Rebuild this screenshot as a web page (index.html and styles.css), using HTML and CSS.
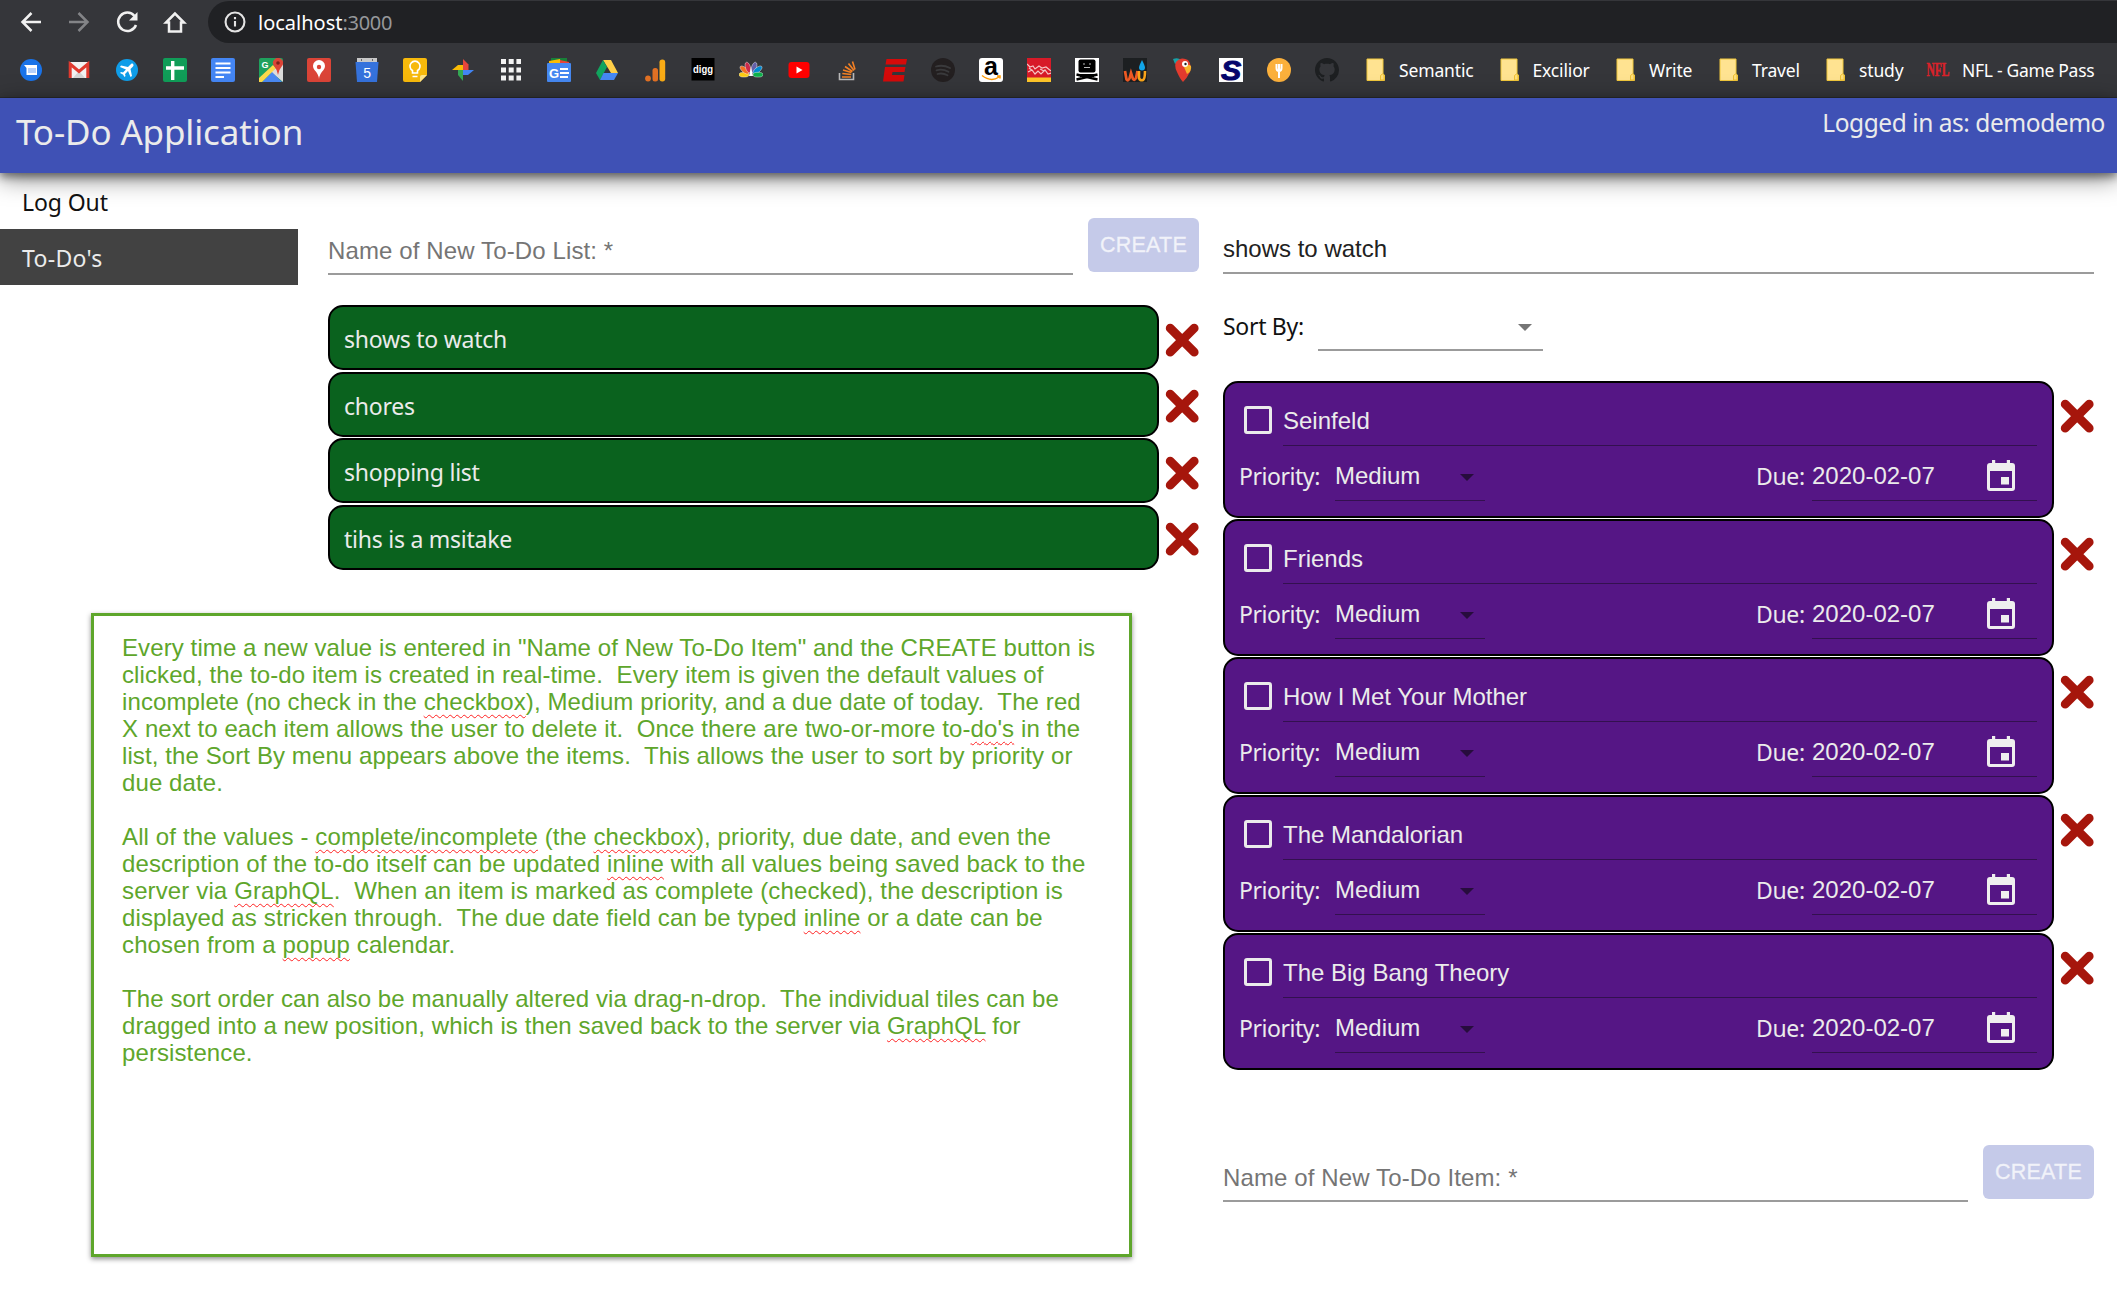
FILE: index.html
```html
<!DOCTYPE html>
<html lang="en">
<head>
<meta charset="utf-8">
<title>To-Do Application</title>
<link rel="stylesheet" href="styles.css">
</head>
<body>
<svg class="defs" width="0" height="0" aria-hidden="true">
  <symbol id="folder" viewBox="0 0 24 24"><path d="M4 1h16v15l1.500 1v5.500H4z" fill="#ffe391" stroke="#f0c73c"/><path d="M17.500 22v-4.500q2-3 3.500 0V22z" fill="#ffdf7c" stroke="#eebf30"/></symbol>
  <symbol id="cross" viewBox="0 0 34 34"><path d="M5.200 5.200l24 24M29.200 5.200l-24 24" stroke="#a6160c" stroke-width="8.800" stroke-linecap="round" fill="none"/></symbol>
  <symbol id="calendar" viewBox="0 0 28 31"><path fill="#efefef" d="M5 0h3.200v3h11.600V0H23v3h2a3 3 0 0 1 3 3v22a3 3 0 0 1-3 3H3a3 3 0 0 1-3-3V6a3 3 0 0 1 3-3h2zM3 11v17h22V11zM14 17h8v7.500h-8z" fill-rule="evenodd"/></symbol>
</svg>

<div class="browser">
  <div class="toolbar">
    <svg class="nav" viewBox="0 0 24 24"><path d="M22 12H4M12.500 3L3.500 12l9 9" /></svg>
    <svg class="nav off" viewBox="0 0 24 24"><path d="M2 12h18M11.500 3l9 9-9 9" /></svg>
    <svg class="nav" viewBox="0 0 24 24"><path d="M19.500 6A9.200 9.200 0 1 0 21 15"/><path d="M22.500 2v8.500H14z" fill="#f1f1f1" stroke="none"/></svg>
    <svg class="nav" viewBox="0 0 24 24"><path d="M12 3.500L3 12.500h3V21.500h12V12.500h3z"/></svg>
    <div class="address">
      <svg class="info" viewBox="0 0 24 24"><circle cx="12" cy="12" r="10.300"/><path d="M12 11v6M12 6.500v2.500"/></svg>
      <span class="host">localhost</span><span class="port">:3000</span>
    </div>
  </div>
  <div class="bookmarks">
    <div class="icons">
    <svg viewBox="0 0 24 24"><circle cx="12" cy="12" r="11" fill="#1a73e8"/><path d="M5 7h13v10H7.500V10z" fill="#fff"/><path d="M9 10h8v5H9z" fill="#b5d0fb"/></svg>
    <svg viewBox="0 0 24 24"><path d="M2 4h20v16H2z" fill="#f2f2f2"/><path d="M6 20l6-7 6 7z" fill="#d5d5d5"/><path d="M3.200 20V6L12 13.500 20.800 6v14" fill="none" stroke="#e03a2f" stroke-width="3"/></svg>
    <svg viewBox="0 0 24 24"><circle cx="12" cy="12" r="11" fill="#0f9de8"/><path d="M18 6c-1-1-2 0-3 1l-2 2-7-1.500L5 9l6 2.500-3 3-2-.5-1 1 3 1.500L9.500 19l1-1-.5-2 3-3 2.500 6 1.500-1-1.500-7 2-2c1-1 1.500-2 .5-3z" fill="#fff"/></svg>
    <svg viewBox="0 0 24 24"><rect width="24" height="24" rx="2" fill="#109d58"/><path d="M9.700 3v19M3 10h18" stroke="#fff" stroke-width="3.400"/></svg>
    <svg viewBox="0 0 24 24"><rect width="24" height="24" rx="2" fill="#4486f4"/><path d="M4.500 5.500h15M4.500 10h15M4.500 14.500h15M4.500 19h8.500" stroke="#fff" stroke-width="2.200"/></svg>
    <svg viewBox="0 0 24 24"><rect width="24" height="24" rx="2" fill="#1fa15d"/><path d="M12 14L24 24V4z" fill="#dcdcdc"/><path d="M3 24l10-10 10 10z" fill="#4a89f3"/><path d="M0 24v-4L14 7l3 3L3 24z" fill="#fdd94a"/><text x="2.500" y="9.500" class="g-mark">G</text><path d="M19 17q-.5-5-4-9a5 5 0 1 1 8 0q-3.500 4-4 9z" fill="#dc4437"/><circle cx="19" cy="5" r="1.800" fill="#7c201b"/></svg>
    <svg viewBox="0 0 24 24"><rect width="24" height="24" rx="2" fill="#db4437"/><path d="M12 21q-.5-5-4.500-9a6 6 0 1 1 9 0q-4 4-4.500 9z" fill="#fff"/><circle cx="12" cy="9" r="2.200" fill="#db4437"/></svg>
    <svg viewBox="0 0 24 24"><path d="M2 0h20v5H2z" fill="#c8c8c8"/><path d="M.5 4h23L22 24H2z" fill="#3572dc"/><path d="M6 2h1M17 2h1" stroke="#666" stroke-width="2"/><text x="12" y="19.500" class="cal-mark">5</text></svg>
    <svg viewBox="0 0 24 24"><path d="M2 0h20a2 2 0 0 1 2 2v15l-7 7H2a2 2 0 0 1-2-2V2a2 2 0 0 1 2-2z" fill="#f7b90b"/><path d="M17 24v-5q0-2 2-2h5z" fill="#ffe58c"/><path d="M9.500 15v-2.500a5 5 0 1 1 5 0V15zM9.500 18.500h5" stroke="#fff" stroke-width="1.600" fill="none"/></svg>
    <svg viewBox="0 0 24 24"><path d="M12 12V1l5.500 5.500V12z" fill="#e8453c"/><path d="M12 12h11l-6 5h-5z" fill="#4285f4"/><path d="M12 12v11l-5-6v-5z" fill="#34a853"/><path d="M12 12H1l6-5h5z" fill="#fbbc05"/></svg>
    <svg viewBox="0 0 24 24"><path d="M2 3.500h20M2 12h20M2 20h20" stroke="#f3f3f3" stroke-width="5" stroke-dasharray="5 2.700"/></svg>
    <svg viewBox="0 0 24 24"><path d="M4 0h16v6H4z" fill="#188038"/><path d="M2 3l11-2 1 5H2z" fill="#fbbc04"/><path d="M13 2l9 2v4h-9z" fill="#ea4335"/><rect y="5" width="24" height="19" rx="1" fill="#4688f1"/><text x="2" y="19.500" class="news-mark">G</text><path d="M13 11h8M13 15h9M13 19h8" stroke="#fff" stroke-width="1.900"/></svg>
    <svg viewBox="0 0 24 24"><path d="M8 2h8l7 13h-7z" fill="#ffcf48"/><path d="M8 2l4 7-7 13-4-7z" fill="#11a45e"/><path d="M8.500 15H23l-4 7H5z" fill="#4688f4"/></svg>
    <svg viewBox="0 0 24 24"><circle cx="5" cy="20.500" r="2.900" fill="#e27124"/><rect x="9.500" y="10" width="5.500" height="13.500" rx="2.500" fill="#e27124"/><rect x="16.500" y="1.500" width="5.700" height="22" rx="2.700" fill="#f9ab15"/></svg>
    <svg viewBox="0 0 24 24"><rect x=".5" width="23" height="22.500"/><text x="2" y="14.500" class="digg-mark" textLength="20" lengthAdjust="spacingAndGlyphs">digg</text></svg>
    <svg viewBox="0 0 24 24"><g stroke="#fff" stroke-width=".4"><ellipse cx="5" cy="16.700" rx="5" ry="2.400" fill="#fccc12"/><ellipse cx="5.500" cy="12" rx="2.500" ry="5.500" transform="rotate(-50 5.500 12)" fill="#f37021"/><ellipse cx="9" cy="9.500" rx="2.500" ry="5.500" transform="rotate(-18 9 9.500)" fill="#cc2a49"/><ellipse cx="15" cy="9.500" rx="2.500" ry="5.500" transform="rotate(18 15 9.500)" fill="#6460aa"/><ellipse cx="18.500" cy="12" rx="2.500" ry="5.500" transform="rotate(50 18.500 12)" fill="#0089d0"/><ellipse cx="19" cy="16.700" rx="5" ry="2.400" fill="#0db14b"/></g><path d="M12 9l2 9h-4z" fill="#fff"/></svg>
    <svg viewBox="0 0 24 24"><rect x="1.500" y="4" width="21" height="16" rx="3" fill="#f00"/><path d="M9.500 8.500v7l6-3.500z" fill="#fff"/></svg>
    <svg viewBox="0 0 24 24"><path d="M4.500 15v6.500h14V15" stroke="#b9b9b9" stroke-width="1.600" fill="none"/><path d="M7 19h9M7.300 15.500l9 1M8 12l8.500 2.500M10 8.500l7.500 5M13.500 5.500l5.500 7M17.500 3.500l2.500 8" stroke="#f38024" stroke-width="1.600"/></svg>
    <svg viewBox="0 0 24 24"><path d="M3.500 1H24l-1 5.500H2.500zM2 9h20.500l-1 5H9.500L9 17h12.500l-1 6.500H0z" fill="#d50a0a"/></svg>
    <svg viewBox="0 0 24 24"><circle cx="12" cy="12" r="12" fill="#231f20"/><path d="M5 8.500q7-2 14 1.500M5.500 12.300q6-1.800 12 1.500M6.500 16q5-1.500 10 1.300" stroke="#3a3a3c" stroke-width="1.800" fill="none" stroke-linecap="round"/></svg>
    <svg viewBox="0 0 24 24"><rect width="24" height="24" rx="3" fill="#fff"/><text x="12" y="16.500" class="a-mark">a</text><path d="M3 17.500q9 7 17 1.500M18 18h3v2.500" stroke="#f90" stroke-width="1.500" fill="none"/></svg>
    <svg viewBox="0 0 24 24"><path d="M0 0h24v24H0z" fill="#d71a28"/><path d="M0 19.500h24V24H0z" fill="#ffc629"/><path d="M0 6l3 3 3-1 2 3 4-3 3 2 4-1 5 4M1 14l4-2 3 4 3-3 3 3 4-4 3 4 3-1M2 10l4 3M13 11l4 2" stroke="#f6c6c6" stroke-width="1.200" fill="none"/></svg>
    <svg viewBox="0 0 24 24"><path d="M0 0h24v24H0z" fill="#fff"/><rect x="3.500" y="1.500" width="17" height="13" rx="2"/><path d="M8 6h2M14 6h2M9 9.500h6" stroke="#bbb" stroke-width="1.200"/><path d="M1.500 16.500l21 5M22.500 16.500l-21 5" stroke="#000" stroke-width="2.400"/><path d="M5 17.500h14" stroke="#000" stroke-width="3"/></svg>
    <svg viewBox="0 0 24 24"><path d="M0 0h24v24H0z" fill="#1c1f21"/><path d="M2 13l1.500 8.500q1.500 2 3-1L8 15l2 6q1.500 2 3-1l1.500-7" stroke="#ee5a24" stroke-width="2.700" fill="none"/><path d="M16 13v7q1 3 4 2 2-1 2-9" stroke="#f9a41a" stroke-width="2.600" fill="none"/><path d="M19 2q-3 6-3 7.500a3 3 0 0 0 6 0Q22 8 19 2z" fill="#12a5e8"/></svg>
    <svg viewBox="0 0 24 24"><path d="M2 1q5-2 8 1L4 6z" fill="#17a2a8"/><path d="M5 4q5-6 12-2 4 4 2 12-3 6-7 10-3-3-6-10-3-6-1-10z" fill="#e33b2e"/><path d="M13 9q4-4 7-1 1 5-4 8z" fill="#f7b32b"/><circle cx="14" cy="6" r="3" fill="#fff"/><circle cx="14.500" cy="6" r="1.200" fill="#222"/></svg>
    <svg viewBox="0 0 24 24"><path d="M0 0h24v24H0z" fill="#fff"/><text x="12" y="22" class="s-mark" textLength="20" lengthAdjust="spacingAndGlyphs">S</text></svg>
    <svg viewBox="0 0 24 24"><circle cx="12" cy="12" r="12" fill="#fbb03b"/><path d="M9.500 6v4q0 3 2.500 3t2.500-3V6M12 6v14" stroke="#fff" stroke-width="2" fill="none"/></svg>
    <svg viewBox="0 0 16 16"><path fill="#1d1f21" d="M8 0C3.580 0 0 3.580 0 8c0 3.540 2.290 6.530 5.470 7.590.4.070.55-.17.55-.38 0-.19-.01-.82-.01-1.490-2.010.37-2.530-.49-2.690-.94-.09-.23-.48-.94-.82-1.130-.28-.15-.68-.52-.01-.53.63-.01 1.080.58 1.230.82.720 1.210 1.870.87 2.330.66.070-.52.280-.87.510-1.070-1.780-.2-3.640-.89-3.640-3.950 0-.87.310-1.590.82-2.150-.08-.2-.36-1.020.08-2.120 0 0 .67-.21 2.200.82.640-.18 1.320-.27 2-.27s1.360.09 2 .27c1.530-1.040 2.200-.82 2.200-.82.440 1.100.16 1.920.08 2.120.51.560.82 1.270.82 2.150 0 3.070-1.870 3.750-3.650 3.950.29.250.54.730.54 1.480 0 1.070-.01 1.930-.01 2.200 0 .21.150.46.550.38A8.010 8.010 0 0 0 16 8c0-4.420-3.580-8-8-8z"/></svg>
    </div>
    <div class="mark m1"><svg><use href="#folder"/></svg><span>Semantic</span></div>
    <div class="mark m2"><svg><use href="#folder"/></svg><span>Excilior</span></div>
    <div class="mark m3"><svg><use href="#folder"/></svg><span>Write</span></div>
    <div class="mark m4"><svg><use href="#folder"/></svg><span>Travel</span></div>
    <div class="mark m5"><svg><use href="#folder"/></svg><span>study</span></div>
    <div class="mark m6"><svg viewBox="0 0 24 24"><text x=".5" y="18" class="nfl-mark" textLength="23" lengthAdjust="spacingAndGlyphs">NFL</text></svg><span>NFL - Game Pass</span></div>
  </div>
</div>

<header class="appbar">
  <h1>To-Do Application</h1>
  <div class="user">Logged in as: demodemo</div>
</header>

<div class="layout">
  <nav class="sidebar">
    <a class="item">Log Out</a>
    <a class="item active">To-Do's</a>
  </nav>

  <section class="lists">
    <div class="newrow">
      <div class="field">Name of New To-Do List: *</div>
      <button class="create">CREATE</button>
    </div>
    <div class="rows">
      <div class="listrow"><div class="list">shows to watch</div><svg class="x"><use href="#cross"/></svg></div>
      <div class="listrow"><div class="list">chores</div><svg class="x"><use href="#cross"/></svg></div>
      <div class="listrow"><div class="list">shopping list</div><svg class="x"><use href="#cross"/></svg></div>
      <div class="listrow"><div class="list">tihs is a msitake</div><svg class="x"><use href="#cross"/></svg></div>
    </div>
  </section>

  <section class="todos">
    <div class="listname">shows to watch</div>
    <div class="sort"><span class="sortlabel">Sort By:</span><div class="select"><i class="arrow"></i></div></div>
    <div class="cards">
      <div class="cardrow"><div class="card">
        <div class="top"><i class="check"></i><div class="desc">Seinfeld</div></div>
        <div class="bottom"><span class="label">Priority:</span><div class="priority">Medium<i class="arrow"></i></div><span class="due">Due:</span><div class="date">2020-02-07<svg><use href="#calendar"/></svg></div></div>
      </div><svg class="x"><use href="#cross"/></svg></div>
      <div class="cardrow"><div class="card">
        <div class="top"><i class="check"></i><div class="desc">Friends</div></div>
        <div class="bottom"><span class="label">Priority:</span><div class="priority">Medium<i class="arrow"></i></div><span class="due">Due:</span><div class="date">2020-02-07<svg><use href="#calendar"/></svg></div></div>
      </div><svg class="x"><use href="#cross"/></svg></div>
      <div class="cardrow"><div class="card">
        <div class="top"><i class="check"></i><div class="desc">How I Met Your Mother</div></div>
        <div class="bottom"><span class="label">Priority:</span><div class="priority">Medium<i class="arrow"></i></div><span class="due">Due:</span><div class="date">2020-02-07<svg><use href="#calendar"/></svg></div></div>
      </div><svg class="x"><use href="#cross"/></svg></div>
      <div class="cardrow"><div class="card">
        <div class="top"><i class="check"></i><div class="desc">The Mandalorian</div></div>
        <div class="bottom"><span class="label">Priority:</span><div class="priority">Medium<i class="arrow"></i></div><span class="due">Due:</span><div class="date">2020-02-07<svg><use href="#calendar"/></svg></div></div>
      </div><svg class="x"><use href="#cross"/></svg></div>
      <div class="cardrow"><div class="card">
        <div class="top"><i class="check"></i><div class="desc">The Big Bang Theory</div></div>
        <div class="bottom"><span class="label">Priority:</span><div class="priority">Medium<i class="arrow"></i></div><span class="due">Due:</span><div class="date">2020-02-07<svg><use href="#calendar"/></svg></div></div>
      </div><svg class="x"><use href="#cross"/></svg></div>
    </div>
    <div class="newrow newitem">
      <div class="field">Name of New To-Do Item: *</div>
      <button class="create">CREATE</button>
    </div>
  </section>
</div>

<aside class="note">
<p>Every time a new value is entered in "Name of New To-Do Item" and the CREATE button is
clicked, the to-do item is created in real-time.  Every item is given the default values of
incomplete (no check in the <u>checkbox</u>), Medium priority, and a due date of today.  The red
X next to each item allows the user to delete it.  Once there are two-or-more to-<u>do's</u> in the
list, the Sort By menu appears above the items.  This allows the user to sort by priority or
due date.</p>
<p class="p2">All of the values - <u>complete/incomplete</u> (the <u>checkbox</u>), priority, due date, and even the
description of the to-do itself can be updated <u>inline</u> with all values being saved back to the
server via <u>GraphQL</u>.  When an item is marked as complete (checked), the description is
displayed as stricken through.  The due date field can be typed <u>inline</u> or a date can be
chosen from a <u>popup</u> calendar.</p>
<p>The sort order can also be manually altered via drag-n-drop.  The individual tiles can be
dragged into a new position, which is then saved back to the server via <u>GraphQL</u> for
persistence.</p>
</aside>
</body>
</html>
```
FILE: styles.css
```css
* { box-sizing: border-box; }
body {
  margin: 0;
  width: 2117px;
  height: 1295px;
  overflow: hidden;
  position: relative;
  background: #fff;
  color: #111;
  font: 23px/32px "Noto Sans", "Open Sans", sans-serif;
}
svg { display: block; flex: none; }
.defs { position: absolute; }

/* browser chrome */
.browser { height: 98px; background: #35363a; border-bottom: 1px solid #2a2b2e; }
.toolbar { display: flex; align-items: center; height: 43px; padding-left: 19px; }
.nav { width: 24px; height: 24px; margin-right: 24px; fill: none; stroke: #f1f1f1; stroke-width: 2.5; }
.nav.off { stroke: #838487; }
.address {
  display: flex; align-items: center; flex: 1;
  height: 42px; margin: 1px 0 0 -3px; padding-left: 15px;
  background: #202124; border-radius: 21px 0 0 21px;
  font-size: 20px; color: #fff;
}
.info { width: 22px; height: 22px; margin: 0 12px 0 1px; fill: none; stroke: #e4e4e4; stroke-width: 2.3; }
.host, .port { padding-top: 1px; }
.port { color: #96989b; letter-spacing: -.3px; }
.bookmarks { display: flex; align-items: center; height: 54px; padding-left: 19px; font-size: 17.500px; color: #fff; letter-spacing: -.15px; }
.icons { display: flex; gap: 24px; width: 1344px; }
.icons svg, .mark svg { width: 24px; height: 24px; }
.mark { display: flex; align-items: center; white-space: nowrap; }
.mark svg { margin-right: 12px; letter-spacing: 0; }
.m1 { width: 133.500px; }
.m2 { width: 116.500px; }
.m3 { width: 103px; }
.m4 { width: 107px; }
.m5 { width: 103px; }
.m6 { letter-spacing: -.3px; }
.g-mark { font: bold 9px "Liberation Sans", sans-serif; fill: #fff; }
.cal-mark { font: 14px "Liberation Sans", sans-serif; fill: #fff; text-anchor: middle; }
.news-mark { font: bold 13px "Liberation Sans", sans-serif; fill: #fff; }
.digg-mark { font: bold 11px "Liberation Sans", sans-serif; fill: #fff; letter-spacing: 0; }
.a-mark { font: bold 25px "Liberation Sans", sans-serif; text-anchor: middle; }
.s-mark { font: italic bold 28px "Liberation Sans", sans-serif; fill: #06066c; stroke: #06066c; text-anchor: middle; }
.nfl-mark { font: bold 18px "Liberation Serif", serif; fill: #d9222a; stroke: #d9222a; stroke-width: .6; }

/* app bar */
.appbar {
  display: flex; justify-content: space-between;
  height: 75px; padding: 10px 12px 0 16px;
  position: relative;
  background: #3f51b5; color: #ebebeb;
  box-shadow: 0 5px 25px rgba(0,0,0,.5), 0 4px 8px rgba(0,0,0,.4);
}
h1 { margin: 0; font-size: 35px; line-height: 48px; font-weight: 400; letter-spacing: -.15px; }
.user { font-size: 24.500px; line-height: 30px; letter-spacing: -.45px; }

/* columns */
.layout { display: flex; align-items: flex-start; }
.sidebar { width: 298px; }
.item { display: block; height: 56px; padding: 13px 0 0 22px; letter-spacing: -.1px; }
.item.active { background: #424242; color: #ebebeb; letter-spacing: .3px; }
.lists { width: 871px; margin-left: 30px; padding-top: 45px; }
.newrow { display: flex; gap: 15px; }
.field, .create, .listname, .desc, .priority, .date, .note { font-family: "Liberation Sans", Arial, sans-serif; font-size: 24px; }
.field { flex: 1; height: 57px; padding-top: 17px; border-bottom: 2px solid #9b9b9b; color: #757575; letter-spacing: .12px; }
.create {
  width: 111px; height: 54px; padding: 0; border: 0; border-radius: 6px;
  background: #c5cae9; color: #f1f2f9; font-size: 21.500px; letter-spacing: .25px;
  -webkit-text-stroke: .3px #f1f2f9;
}
.rows { display: flex; flex-direction: column; gap: 1.600px; margin-top: 30px; }
.listrow { display: flex; align-items: center; gap: 6px; }
.list {
  width: 831px; height: 65px; padding: 16px 0 0 14px; letter-spacing: -.25px;
  background: #0a621e; color: #ebebeb; border: 2px solid #000; border-radius: 15px;
}
.x { width: 34px; height: 34px; }
.listrow .x { margin-top: 4px; }

.todos { width: 871px; margin-left: 24px; padding-top: 45px; }
.listname { height: 56px; padding-top: 15px; border-bottom: 2px solid #9b9b9b; color: #222; }
.sort { display: flex; height: 77px; margin-bottom: 30px; }
.sortlabel { width: 95px; padding-top: 36px; letter-spacing: -.3px; }
.select { display: flex; width: 225px; justify-content: flex-end; align-items: flex-end; padding: 0 11px 18px 0; border-bottom: 2px solid #9b9b9b; }
.arrow { border: 7px solid transparent; border-top-color: #757575; border-bottom: 0; }
.cards { display: flex; flex-direction: column; gap: 1px; }
.cardrow { display: flex; gap: 6px; }
.cardrow .x { margin-top: 18px; }
.card {
  width: 831px; height: 137px; padding: 0 15px;
  background: #551685; color: #ebebeb; border: 2px solid #000; border-radius: 15px;
}
.top, .bottom { display: flex; }
.check { width: 28px; height: 28px; margin: 23px 11px 0 4px; border: 3px solid #ebebeb; border-radius: 3px; }
.desc { flex: 1; height: 63px; padding-top: 22px; border-bottom: 1px solid #33104f; }
.bottom { height: 55px; }
.label { width: 96px; margin-left: -1px; padding-top: 14px; letter-spacing: -.45px; }
.priority, .date { display: flex; justify-content: space-between; padding-top: 14px; border-bottom: 1px solid #33104f; }
.priority { width: 150px; padding-right: 11px; }
.priority .arrow { height: 7px; margin-top: 14px; border-top-color: #270c3d; }
.due { margin-left: auto; padding-top: 14px; width: 56px; letter-spacing: -.35px; }
.date { width: 225px; padding-right: 22px; }
.date svg { width: 28px; height: 31px; }
.newitem { margin-top: 75px; }

/* annotation laid over the page */
.note {
  position: absolute; left: 91px; top: 613px; width: 1041px; height: 644px;
  padding: 18px 0 0 28px; background: #fff; border: 3px solid #5ea62b;
  box-shadow: 0 2px 5px rgba(0,0,0,.45);
  color: #5ea62b; line-height: 27px;
}
.note p { margin: 0 0 27px; white-space: pre; letter-spacing: .1px; }
.note .p2 { letter-spacing: .13px; }
.note u { text-decoration: underline wavy #f22 1px; text-underline-offset: 4px; text-decoration-skip-ink: none; }
```
